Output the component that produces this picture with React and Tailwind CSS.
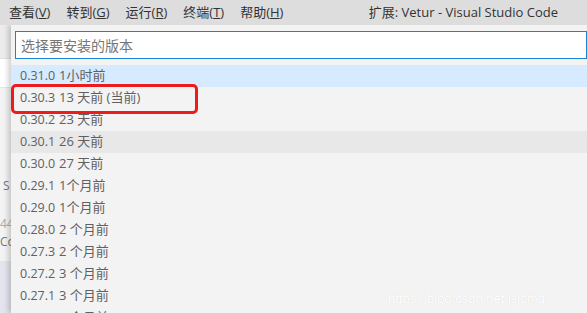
import React from "react";

const rows = [
  ["0.31.0", "1小时前"],
  ["0.30.3", "13 天前 (当前)"],
  ["0.30.2", "23 天前"],
  ["0.30.1", "26 天前"],
  ["0.30.0", "27 天前"],
  ["0.29.1", "1个月前"],
  ["0.29.0", "1个月前"],
  ["0.28.0", "2 个月前"],
  ["0.27.3", "2 个月前"],
  ["0.27.2", "3 个月前"],
  ["0.27.1", "3 个月前"],
  ["0.27.0", "4 个月前"],
];

const font = { fontFamily: '"Open Sans", "Noto Sans CJK SC", sans-serif' };

export default function App() {
  return (
    <div
      className="relative w-[587px] h-[313px] overflow-hidden bg-[#f3f3f3] text-[#616161]"
      style={font}
    >
      {/* title bar */}
      <div className="flex items-center h-[25px] bg-[#dddddd] text-[#333] text-[13px] leading-none">
        <div className="flex pl-[9px] gap-[16px]">
          <span>查看(<u>V</u>)</span>
          <span>转到(<u>G</u>)</span>
          <span>运行(<u>R</u>)</span>
          <span>终端(<u>T</u>)</span>
          <span>帮助(<u>H</u>)</span>
        </div>
        <div className="ml-auto mr-[29px]">扩展: Vetur - Visual Studio Code</div>
      </div>

      <div className="flex h-[288px] overflow-hidden">
        {/* left background strip */}
        <div className="w-[11px] shrink-0 flex flex-col text-[12px] text-[#777] overflow-hidden">
          <div className="h-[34px] shrink-0 bg-[#ececec] border-b border-[#e2e2e2]" />
          <div className="h-[29px] shrink-0 bg-white border-b border-[#e6e6e6]" />
          <div className="flex-1 bg-[#f3f3f3] flex flex-col">
            <div className="h-[87px] shrink-0" />
            <div className="h-[22px] shrink-0 leading-[22px] pl-[3px]">S</div>
            <div className="h-[18px] shrink-0" />
            <div className="h-[18px] shrink-0 leading-[18px] text-[#aaa] whitespace-nowrap">44</div>
            <div className="h-[18px] shrink-0 leading-[18px] whitespace-nowrap">Co</div>
            <div className="h-[10px] shrink-0" />
            <div className="flex-1 bg-[#e4e4ee]" />
          </div>
        </div>

        {/* quick pick */}
        <div className="flex-1 bg-[#f3f3f3] shadow-[-3px_0_5px_rgba(0,0,0,0.18)] flex flex-col pt-[6px] overflow-hidden">
          <div className="ml-[4px] shrink-0 h-[28px] bg-white border border-[#1883d7] flex items-center pl-[5px] text-[14px] text-[#767676]">
            选择要安装的版本
          </div>
          <div className="mt-[6px] shrink-0 flex flex-col">
            {rows.map(([v, d], i) => (
              <div
                key={v}
                className={
                  "h-[22px] shrink-0 flex items-center pl-[9px] text-[13px] text-[#606060] " +
                  (i === 0 ? "bg-[#d6ebff]" : i === 3 ? "bg-[#e8e8e8]" : "")
                }
              >
                <span className="w-[39px] text-[12.5px]">{v}</span>
                <span>{d}</span>
              </div>
            ))}
          </div>
        </div>
      </div>

      {/* red annotation */}
      <div className="absolute left-[11px] top-[84px] w-[187px] h-[30px] border-[3px] border-[#ec1c1c] rounded-[5px]" />

      {/* watermark */}
      <div
        className="absolute left-[388px] top-[289px] text-[13px] text-white"
        style={{
          fontFamily: '"Liberation Sans", Arial, sans-serif',
          textShadow: "0 0 1px rgba(0,0,0,0.12)",
        }}
      >
        https://blog.csdn.net/jsjcmq
      </div>
    </div>
  );
}
